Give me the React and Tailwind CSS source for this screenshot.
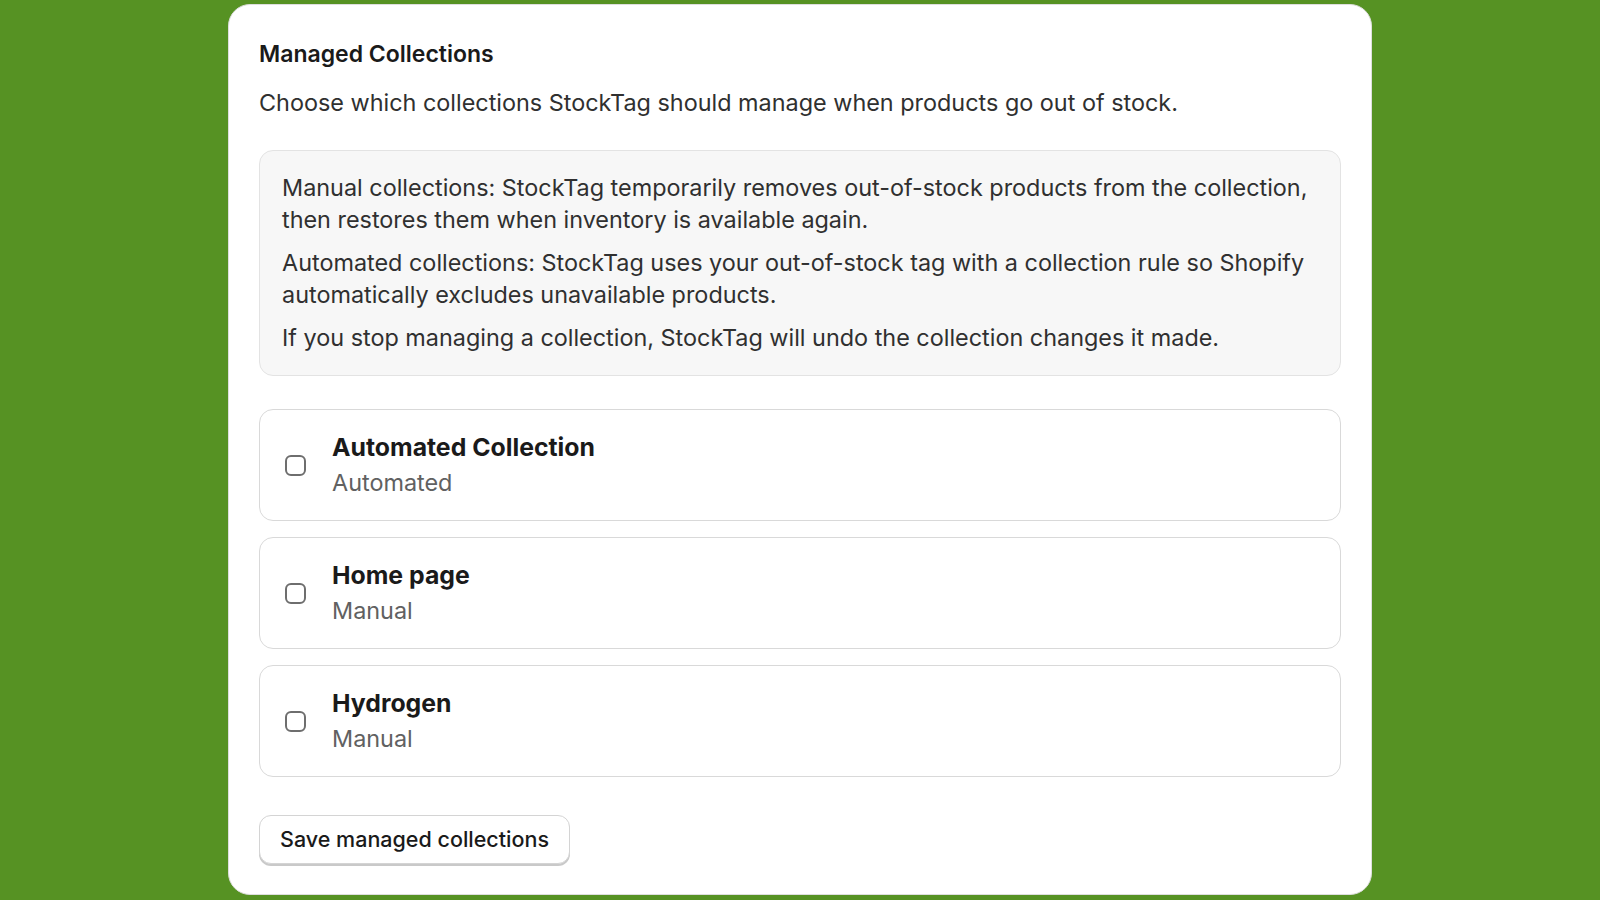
import React, { useState } from "react";

const collections = [
  { id: "automated", title: "Automated Collection", type: "Automated" },
  { id: "home", title: "Home page", type: "Manual" },
  { id: "hydrogen", title: "Hydrogen", type: "Manual" },
];

const CollectionRow = ({ item, checked, onToggle }) => (
  <label className="flex items-center gap-[26px] rounded-[14px] border border-[#d9d9d9] bg-white px-[25px] py-[21px] cursor-pointer">
    <input
      type="checkbox"
      className="sr-only"
      checked={checked}
      onChange={onToggle}
    />
    <span
      className={`flex h-[21px] w-[21px] shrink-0 items-center justify-center rounded-[6px] border-2 ${
        checked ? "border-[#303030] bg-[#303030]" : "border-[#6e6e6e] bg-white"
      }`}
    >
      {checked && (
        <svg viewBox="0 0 20 20" className="h-[16px] w-[16px]" fill="none">
          <path d="M5 10.5l3.2 3L15 7" stroke="#fff" strokeWidth="2.2" strokeLinecap="round" strokeLinejoin="round" />
        </svg>
      )}
    </span>
    <span className="flex flex-col gap-[4px]">
      <span className="text-[24.8px] leading-[32px] font-bold text-[#1a1a1a]">
        {item.title}
      </span>
      <span className="text-[23.4px] leading-[32px] text-[#616161]">
        {item.type}
      </span>
    </span>
  </label>
);

export default function App() {
  const [selected, setSelected] = useState({}); // { id: true }

  const toggle = (id) =>
    setSelected((prev) => ({ ...prev, [id]: !prev[id] }));

  return (
    <div
      className="flex h-[900px] w-full justify-center overflow-hidden bg-[#569223]"
      style={{ fontFamily: "Inter, 'Noto Sans', sans-serif" }}
    >
      <div className="mt-[4px] h-[891px] w-[1144px] rounded-[22px] border border-[#dedede] bg-white px-[30px] pt-[33px] text-[#303030]">
        <h2 className="text-[23px] leading-[32px] font-semibold text-[#1a1a1a]">
          Managed Collections
        </h2>
        <p className="mt-[17px] text-[23.4px] leading-[32px]">
          Choose which collections StockTag should manage when products go out
          of stock.
        </p>

        {/* Info box */}
        <div className="mt-[31px] flex flex-col gap-[11px] rounded-[14px] border border-[#e3e3e3] bg-[#f7f7f7] px-[22px] py-[21px] text-[23.4px] leading-[32px]">
          <p>
            Manual collections: StockTag temporarily removes out-of-stock
            products from the collection, then restores them when inventory is
            available again.
          </p>
          <p>
            Automated collections: StockTag uses your out-of-stock tag with a
            collection rule so Shopify automatically excludes unavailable
            products.
          </p>
          <p>
            If you stop managing a collection, StockTag will undo the collection
            changes it made.
          </p>
        </div>

        {/* Collection list */}
        <div className="mt-[33px] flex flex-col gap-[16px]">
          {collections.map((item) => (
            <CollectionRow
              key={item.id}
              item={item}
              checked={!!selected[item.id]}
              onToggle={() => toggle(item.id)}
            />
          ))}
        </div>

        <button className="mt-[38px] h-[49px] rounded-[12px] border border-[#d4d4d4] bg-white px-[20px] text-[21.5px] font-medium text-[#1a1a1a] shadow-[0_2px_0_#c9c9c9]">
          Save managed collections
        </button>
      </div>
    </div>
  );
}
